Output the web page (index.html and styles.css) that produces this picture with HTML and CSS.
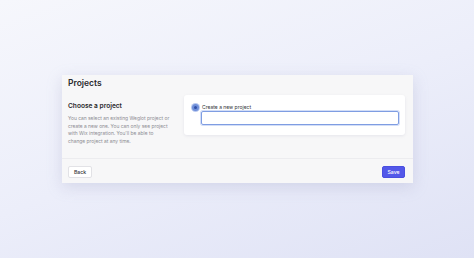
FILE: index.html
```html
<!DOCTYPE html>
<html>
<head>
<meta charset="utf-8">
<link rel="stylesheet" href="styles.css">
</head>
<body>
<div class="stage">
  <div class="card">
    <div class="card-title">Projects</div>
    <div class="card-body">
      <div class="intro">
        <div class="intro-title">Choose a project</div>
        <p class="intro-text">You can select an existing Weglot project or create a new one. You can only see project with Wix integration. You'll be able to change project at any time.</p>
      </div>
      <div class="panel">
        <label class="option">
          <span class="radio"><span class="radio-dot"></span></span>
          <span class="option-label">Create a new project</span>
        </label>
        <div class="input"></div>
      </div>
    </div>
    <div class="card-footer">
      <button class="btn btn-back">Back</button>
      <button class="btn btn-save">Save</button>
    </div>
  </div>
</div>
</body>
</html>
```
FILE: styles.css
```css
html, body {
  margin: 0;
  padding: 0;
  height: 100%;
}
body {
  font-family: Inter, "Noto Sans", sans-serif;
  background: linear-gradient(160deg, #f6f7fc 0%, #eceefa 50%, #dfe2f5 100%);
}
.stage {
  height: 258px;
  display: flex;
  align-items: center;
  justify-content: center;
}
.card {
  width: 351px;
  background: #f7f7f8;
  box-shadow: 0 4px 14px rgba(150, 155, 190, 0.28);
  box-sizing: border-box;
  margin-left: 1px;
}
.card-title {
  font-size: 8.5px;
  font-weight: 600;
  color: #2a2a2e;
  padding: 2px 8px 0 6px;
  height: 13px;
  line-height: 13px;
}
.card-body {
  display: flex;
  padding: 5px 8px 0 6px;
  gap: 13px;
  height: 63px;
  border-bottom: 1px solid #ececef;
}
.intro {
  width: 103px;
  flex: none;
  padding-top: 6.5px;
}
.intro-title {
  font-size: 6.6px;
  font-weight: 600;
  color: #2a2a2e;
  line-height: 9px;
}
.intro-text {
  margin: 4.8px 0 0;
  font-size: 4.9px;
  line-height: 7.4px;
  color: #8c8c92;
}
.panel {
  flex: 1;
  align-self: flex-start;
  background: #ffffff;
  border-radius: 3px;
  box-shadow: 0 1px 3px rgba(180, 180, 200, 0.25);
  padding: 8px 6px 10px 8px;
  box-sizing: border-box;
  height: 40px;
  display: flex;
  flex-direction: column;
}
.option {
  display: flex;
  align-items: center;
  gap: 3px;
  height: 8px;
}
.radio {
  width: 7px;
  height: 7px;
  border-radius: 50%;
  background: #6f8fd9;
  box-shadow: 0 0 0 1px #b9c9ef;
  display: flex;
  align-items: center;
  justify-content: center;
  flex: none;
}
.radio-dot {
  width: 3px;
  height: 3px;
  border-radius: 50%;
  background: #2f4fa8;
}
.option-label {
  font-size: 5px;
  color: #333338;
}
.input {
  margin-left: 9px;
  margin-top: 0;
  height: 14px;
  box-sizing: border-box;
  border: 1px solid #7f9de2;
  border-radius: 2px;
  box-shadow: 0 0 0 1px #d3def7;
}
.card-footer {
  display: flex;
  justify-content: space-between;
  align-items: center;
  padding: 7px 8px 5px 6px;
}
.btn {
  font-family: Inter, "Noto Sans", sans-serif;
  font-size: 5.2px;
  font-weight: 500;
  height: 12px;
  border-radius: 2px;
  padding: 0;
  cursor: pointer;
}
.btn-back {
  width: 24px;
  background: #ffffff;
  border: 1px solid #e2e2e6;
  color: #333338;
}
.btn-save {
  width: 23px;
  background: #5358e9;
  border: 1px solid #4a4fe0;
  color: #ffffff;
}
```
